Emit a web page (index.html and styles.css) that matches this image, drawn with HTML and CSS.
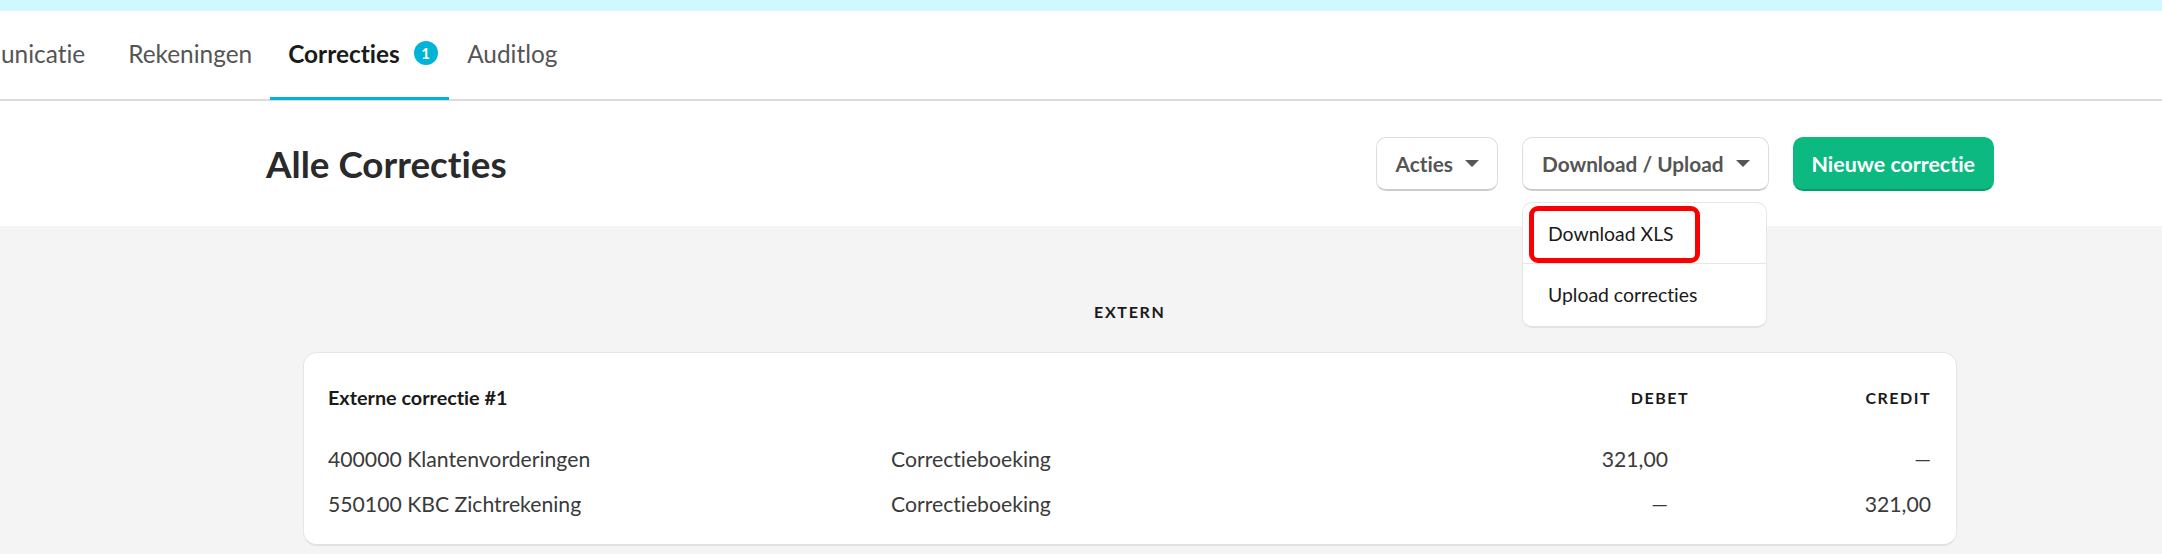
FILE: index.html
```html
<!DOCTYPE html>
<html lang="nl">
<head>
<meta charset="utf-8">
<title>Alle Correcties</title>
<link rel="stylesheet" href="styles.css">
</head>
<body>
<div class="topbar"></div>
<nav class="tabs">
  <a class="tab comm">Communicatie</a>
  <a class="tab">Rekeningen</a>
  <a class="tab active">Correcties <span class="badge">1</span></a>
  <a class="tab">Auditlog</a>
</nav>
<header class="head">
  <h1>Alle Correcties</h1>
  <div class="actions">
    <button class="btn">Acties <span class="caret"></span></button>
    <div class="dd">
      <button class="btn">Download / Upload <span class="caret"></span></button>
      <div class="menu">
        <div class="item first">Download XLS</div>
        <div class="item">Upload correcties</div>
        <div class="mark"></div>
      </div>
    </div>
    <button class="btn primary">Nieuwe correctie</button>
  </div>
</header>
<main class="main">
  <div class="section">EXTERN</div>
  <section class="card">
    <div class="row hdr">
      <strong class="name">Externe correctie #1</strong>
      <span></span>
      <span class="lab">DEBET</span>
      <span class="lab">CREDIT</span>
    </div>
    <div class="row line">
      <span>400000 Klantenvorderingen</span>
      <span>Correctieboeking</span>
      <span class="num debet">321,00</span>
      <span class="num">—</span>
    </div>
    <div class="row line">
      <span>550100 KBC Zichtrekening</span>
      <span>Correctieboeking</span>
      <span class="num debet">—</span>
      <span class="num">321,00</span>
    </div>
  </section>
</main>
</body>
</html>
```

FILE: styles.css
```css
* { box-sizing: border-box; }
html, body { margin: 0; height: 554px; overflow: hidden; }
body { font-family: Lato, "Liberation Sans", sans-serif; font-variant-ligatures: none; color: #2a2a2a; background: #f4f4f4; width: 2162px; }
.topbar { height: 11px; background: #cff8ff; }
.tabs { height: 90px; display: flex; background: #fff; border-bottom: 2px solid #ddd; margin-left: -89px; width: 2251px; }
.tab { display: flex; align-items: center; height: 89px; padding: 0 17px 5px 18px; font-size: 24.4px; color: #555; white-space: nowrap; }
.comm { padding: 0 25px 5px 20px; }
.tab.active { color: #1a1a1a; font-weight: 700; gap: 14px; border-bottom: 3px solid #00b4d8; width: 179px; margin-left: 1px; padding-bottom: 2px; }
.badge { flex: none; width: 24px; height: 24px; border-radius: 50%; background: #00b4d8; color: #fff; font-size: 15px; font-weight: 700; display: flex; align-items: center; justify-content: center; }
.head { height: 125px; background: #fff; display: flex; align-items: center; justify-content: space-between; padding: 0 168px 0 266px; }
h1 { margin: 0; font-size: 36.8px; font-weight: 700; color: #2a2a2a; }
.actions { display: flex; gap: 24px; margin-top: 1px; }
.dd { position: relative; }
.btn { height: 54px; padding: 0 18px 0 19px; font: 700 20.8px Lato, "Liberation Sans", sans-serif; font-variant-ligatures: none; color: #555; background: #fff; border: 1px solid #ddd; border-bottom: 2px solid #ccc; border-radius: 10px; display: flex; align-items: center; gap: 12px; white-space: nowrap; }
.caret { width: 0; height: 0; border-left: 7px solid transparent; border-right: 7px solid transparent; border-top: 7px solid #555; }
.primary { background: #0cb981; color: #fff; border: 1px solid #0cb981; border-bottom: 2px solid #0a9a6c; padding-left: 18px; font-size: 21.4px; }
.menu { position: absolute; left: 0; top: 65px; width: 245px; height: 126px; background: #fff; border: 1px solid #e6e6e6; border-bottom: 2px solid #e2e2e2; border-radius: 10px; font-size: 19.4px; color: #1a1a1a; }
.item { height: 61px; padding: 0 0 0 25px; display: flex; align-items: center; }
.item.first { border-bottom: 1px solid #e6e6e6; }
.mark { position: absolute; left: 6px; top: 3px; width: 171px; height: 57px; border: 5px solid #fa0000; border-radius: 9px; }
.main { padding: 0 0 0 303px; }
.section { height: 126px; padding-top: 76px; margin-left: 791px; font-size: 16px; font-weight: 700; letter-spacing: 1.7px; color: #1a1a1a; }
.card { width: 1654px; height: 194px; background: #fff; border: 1px solid #e6e6e6; border-bottom: 2px solid #e2e2e2; border-radius: 14px; padding: 5px 25px 0 24px; font-size: 21.2px; color: #3a3a3a; }
.row { display: grid; grid-template-columns: 563px 1fr 160px 242px; align-items: center; }
.hdr { height: 78px; }
.line { height: 45px; }
.name { font-size: 19.8px; font-weight: 700; color: #1a1a1a; }
.lab { text-align: right; font-size: 16px; font-weight: 700; letter-spacing: 1.5px; color: #1a1a1a; }
.num { text-align: right; }
.debet { padding-right: 21px; }
```
